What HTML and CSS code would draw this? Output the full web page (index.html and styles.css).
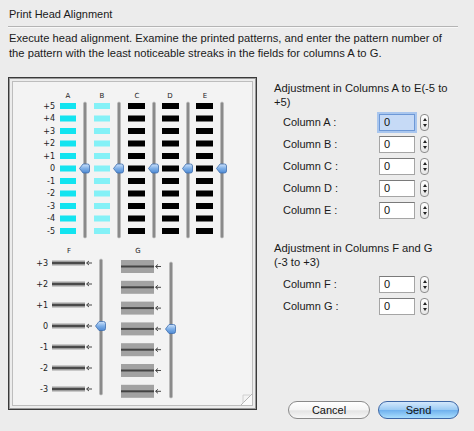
FILE: index.html
```html
<!DOCTYPE html>
<html lang="en">
<head>
<meta charset="UTF-8" />
<title>Print Head Alignment</title>
<link rel="stylesheet" href="styles.css">
</head>
<body>

<div class="dialog">
  <div class="title">Print Head Alignment</div>
  <div class="sep"></div>
  <p class="desc">Execute head alignment. Examine the printed patterns, and enter the pattern number of the pattern with the least noticeable streaks in the fields for columns A to G.</p>

  <div class="main">
    <div class="pattern">
      <div class="canvas">
        <svg width="239" height="323" viewBox="13 80 239 323">
          <defs>
            <linearGradient id="thumbFill" x1="0" y1="0" x2="0" y2="1">
              <stop offset="0" stop-color="#cfe3fb"/>
              <stop offset="0.5" stop-color="#7fb0e8"/>
              <stop offset="1" stop-color="#4f8ad4"/>
            </linearGradient>
            <g id="rowAE">
              <rect x="60" y="-3" width="16" height="6" fill="#12e4f0"/>
              <rect x="94" y="-3" width="16" height="6" fill="#84f1f7"/>
              <rect x="128" y="-3" width="17" height="6" fill="#000"/>
              <rect x="162" y="-3" width="17" height="6" fill="#000"/>
              <rect x="196" y="-3" width="17" height="6" fill="#000"/>
            </g>
            <g id="thumb">
              <path d="M-5,0 L-1.5,-4.5 H3 Q5,-4.5 5,-2.5 V2.5 Q5,4.5 3,4.5 H-1.5 Z" fill="url(#thumbFill)" stroke="#3f6fae" stroke-width="0.8"/>
            </g>
            <g id="track">
              <rect x="-1.5" y="0" width="3" height="136" rx="1.5" fill="#8a8a8a" stroke="#b9b9b9" stroke-width="0.6"/>
            </g>
            <g id="barF">
              <rect x="52" y="-2.5" width="33" height="5" fill="#9d9d9d"/>
              <rect x="52" y="-1" width="33" height="2" fill="#4a4a4a"/>
              <path d="M92,0 H87 M89,-2 L86.5,0 L89,2" stroke="#333" stroke-width="0.9" fill="none"/>
            </g>
            <g id="barG">
              <rect x="121" y="-6.5" width="33" height="13" fill="#a2a2a2"/>
              <rect x="121" y="-1" width="33" height="2" fill="#444"/>
              <path d="M161,0 H156 M158,-2 L155.5,0 L158,2" stroke="#333" stroke-width="0.9" fill="none"/>
            </g>
          </defs>

          <g class="hdr">
            <text x="68" y="96">A</text>
            <text x="102" y="96">B</text>
            <text x="137" y="96">C</text>
            <text x="170" y="96">D</text>
            <text x="205" y="96">E</text>
          </g>

          <g class="lbl">
            <text x="55" y="104">+5</text>
            <text x="55" y="116.5">+4</text>
            <text x="55" y="129">+3</text>
            <text x="55" y="141.5">+2</text>
            <text x="55" y="154">+1</text>
            <text x="55" y="166.5">0</text>
            <text x="55" y="179">-1</text>
            <text x="55" y="191.5">-2</text>
            <text x="55" y="204">-3</text>
            <text x="55" y="216.5">-4</text>
            <text x="55" y="229">-5</text>
          </g>

          <use href="#rowAE" y="104"/>
          <use href="#rowAE" y="116.5"/>
          <use href="#rowAE" y="129"/>
          <use href="#rowAE" y="141.5"/>
          <use href="#rowAE" y="154"/>
          <use href="#rowAE" y="166.5"/>
          <use href="#rowAE" y="179"/>
          <use href="#rowAE" y="191.5"/>
          <use href="#rowAE" y="204"/>
          <use href="#rowAE" y="216.5"/>
          <use href="#rowAE" y="229"/>

          <use href="#track" x="85" y="100"/>
          <use href="#track" x="119" y="100"/>
          <use href="#track" x="154" y="100"/>
          <use href="#track" x="188" y="100"/>
          <use href="#track" x="222" y="100"/>

          <use href="#thumb" x="84.5" y="166.5"/>
          <use href="#thumb" x="118.5" y="166.5"/>
          <use href="#thumb" x="153.5" y="166.5"/>
          <use href="#thumb" x="187.5" y="166.5"/>
          <use href="#thumb" x="221.5" y="166.5"/>

          <g class="hdr">
            <text x="69" y="251">F</text>
            <text x="138" y="251">G</text>
          </g>

          <g class="lbl">
            <text x="48" y="261">+3</text>
            <text x="48" y="282">+2</text>
            <text x="48" y="303">+1</text>
            <text x="48" y="324">0</text>
            <text x="48" y="345">-1</text>
            <text x="48" y="366">-2</text>
            <text x="48" y="387">-3</text>
          </g>

          <use href="#barF" y="261"/>
          <use href="#barF" y="282"/>
          <use href="#barF" y="303"/>
          <use href="#barF" y="324"/>
          <use href="#barF" y="345"/>
          <use href="#barF" y="366"/>
          <use href="#barF" y="387"/>

          <use href="#barG" y="264.5"/>
          <use href="#barG" y="285.3"/>
          <use href="#barG" y="306.1"/>
          <use href="#barG" y="326.9"/>
          <use href="#barG" y="347.7"/>
          <use href="#barG" y="368.5"/>
          <use href="#barG" y="389.3"/>

          <use href="#track" x="101" y="257"/>
          <use href="#track" x="171" y="260"/>
          <use href="#thumb" x="100.5" y="324"/>
          <use href="#thumb" x="170.5" y="327"/>

          <!-- page curl -->
          <path d="M241,403 L252,392 V403 Z" fill="#fbfbfb"/>
          <path d="M241,403 L252,392" stroke="#b5b5b5" stroke-width="1" fill="none"/>
          <path d="M243,401 L243,393 L250,393" stroke="#d0d0d0" stroke-width="1" fill="none"/>
        </svg>
      </div>
    </div>

    <div class="adjust">
      <div class="group-title">Adjustment in Columns A to E(-5 to +5)</div>
      <div class="rows">
        <div class="row"><label>Column A :</label><input class="num focus" value="0"><span class="stepper"></span></div>
        <div class="row"><label>Column B :</label><input class="num" value="0"><span class="stepper"></span></div>
        <div class="row"><label>Column C :</label><input class="num" value="0"><span class="stepper"></span></div>
        <div class="row"><label>Column D :</label><input class="num" value="0"><span class="stepper"></span></div>
        <div class="row"><label>Column E :</label><input class="num" value="0"><span class="stepper"></span></div>
      </div>

      <div class="group-title second">Adjustment in Columns F and G<br>(-3 to +3)</div>
      <div class="rows">
        <div class="row"><label>Column F :</label><input class="num" value="0"><span class="stepper"></span></div>
        <div class="row"><label>Column G :</label><input class="num" value="0"><span class="stepper"></span></div>
      </div>

      <div class="buttons">
        <button class="btn">Cancel</button>
        <button class="btn default">Send</button>
      </div>
    </div>
  </div>
</div>

</body>
</html>
```

FILE: styles.css
```css
body {
  margin: 0;
  background: #ececec;
  font-family: 'Liberation Sans', Arial, sans-serif;
  font-size: 11px;
  color: #1a1a1a;
}

.dialog {
  padding: 7px 0 0 8px;
}

.title {
  line-height: 14px;
  padding-left: 1px;
}

.sep {
  width: 450px;
  height: 1px;
  margin-top: 5px;
  background: #b4b4b4;
  border-bottom: 1px solid #f8f8f8;
}

.desc {
  margin: 3px 0 0 1px;
  line-height: 15px;
  width: 442px;
  font-size: 11.2px;
}

.main {
  display: flex;
  align-items: flex-start;
  margin-top: 16px;
}

/* printed pattern picture */
.pattern {
  box-sizing: border-box;
  width: 249px;
  height: 333px;
  border: 1px solid #3a3a3a;
  box-shadow: inset 0 0 0 1px #9a9a9a;
  padding: 3px;
}

.canvas {
  border: 1px solid #bdbdbd;
  background: #f3f3f3;
  height: 323px;
}

.canvas svg {
  display: block;
}

.hdr text {
  font-family: 'DejaVu Sans', sans-serif;
  font-size: 7px;
  fill: #222;
  text-anchor: middle;
}

.lbl text {
  font-family: 'DejaVu Sans', sans-serif;
  font-size: 8px;
  fill: #222;
  text-anchor: end;
  dominant-baseline: central;
}

/* right column */
.adjust {
  width: 185px;
  margin-left: 17px;
}

.group-title {
  line-height: 14px;
  margin-top: 4px;
  font-size: 11.2px;
}

.group-title.second {
  margin-top: 20px;
}

.rows {
  margin-top: 2px;
  padding-left: 9px;
}

.group-title.second + .rows {
  margin-top: 4px;
}

.row {
  display: flex;
  align-items: center;
  height: 22px;
}

.row label {
  width: 96px;
}

.num {
  box-sizing: border-box;
  width: 36px;
  height: 17px;
  margin: 0;
  padding: 0 0 0 4px;
  border: 1px solid #a5a5a5;
  border-top-color: #7a7a7a;
  background: #fff;
  font-family: inherit;
  font-size: 11px;
  color: #111;
  outline: none;
}

.num.focus {
  background: #c6daf6;
  border-color: #6d98d6;
  box-shadow: 0 0 0 2px #a9c6ee;
}

.stepper {
  position: relative;
  box-sizing: border-box;
  width: 9px;
  height: 17px;
  margin-left: 5px;
  border: 1px solid #8d8d8d;
  border-radius: 4px;
  background: linear-gradient(#ffffff, #e6e6e6);
}

.stepper::before,
.stepper::after {
  content: '';
  position: absolute;
  left: 1.5px;
  border-left: 2px solid transparent;
  border-right: 2px solid transparent;
}

.stepper::before {
  top: 3px;
  border-bottom: 3px solid #222;
}

.stepper::after {
  bottom: 3px;
  border-top: 3px solid #222;
}

.buttons {
  display: flex;
  justify-content: flex-end;
  gap: 8px;
  margin-top: 84px;
}

.btn {
  box-sizing: border-box;
  width: 82px;
  height: 18px;
  padding: 0;
  border: 1px solid #8a8a8a;
  border-radius: 9px;
  background: linear-gradient(#ffffff 0%, #f4f4f4 50%, #e4e4e4 55%, #f7f7f7 100%);
  font-family: inherit;
  font-size: 11px;
  color: #111;
}

.btn.default {
  width: 81px;
  border-color: #3d67a6;
  background: linear-gradient(#d3e8fc 0%, #9ccbf4 48%, #6fb1ee 52%, #a9ddfd 100%);
}
```
